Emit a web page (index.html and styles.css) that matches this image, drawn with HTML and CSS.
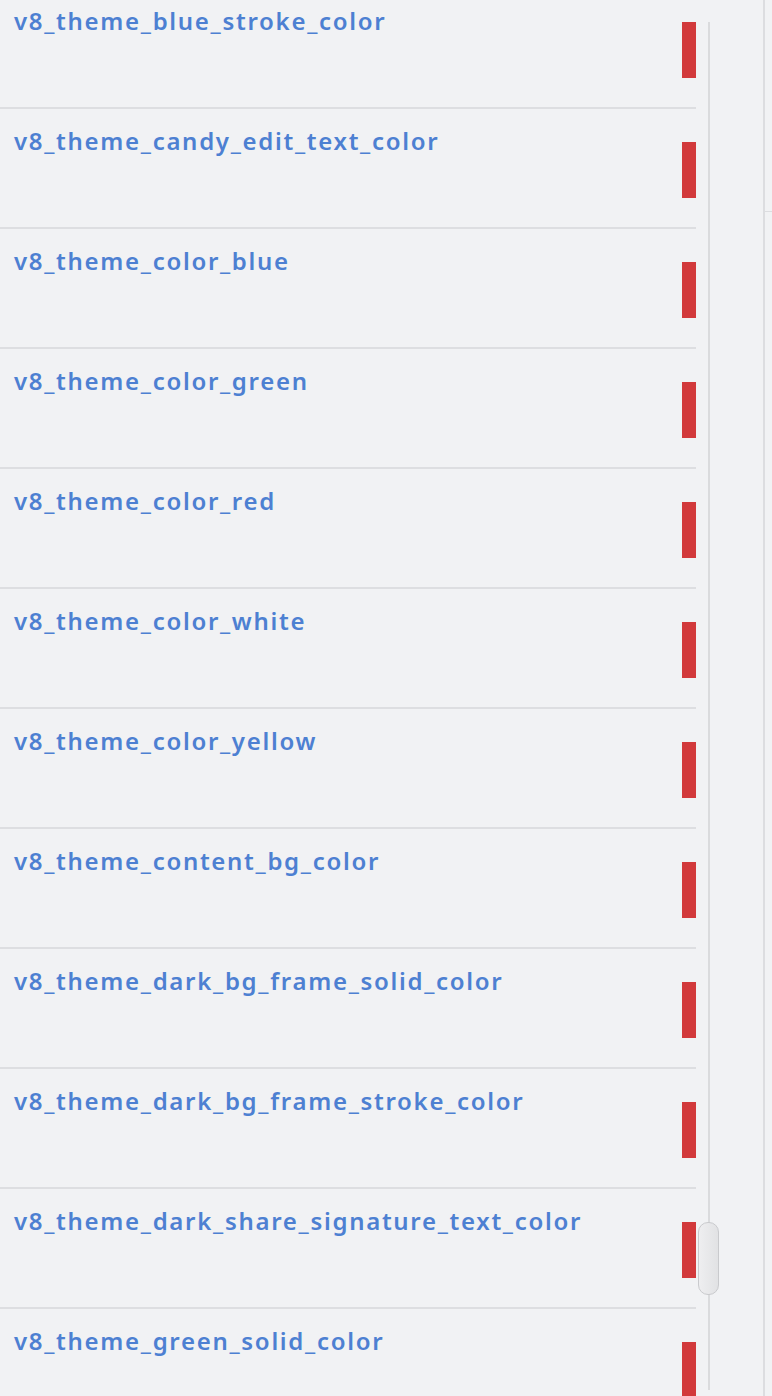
FILE: index.html
```html
<!DOCTYPE html>
<html>
<head>
<meta charset="utf-8">
<link rel="stylesheet" href="styles.css">
</head>
<body>
<div class="app">
  <div class="list">
    <div class="row"><span class="name">v8_theme_blue_stroke_color</span><span class="swatch"></span></div>
    <div class="row"><span class="name">v8_theme_candy_edit_text_color</span><span class="swatch"></span></div>
    <div class="row"><span class="name">v8_theme_color_blue</span><span class="swatch"></span></div>
    <div class="row"><span class="name">v8_theme_color_green</span><span class="swatch"></span></div>
    <div class="row"><span class="name">v8_theme_color_red</span><span class="swatch"></span></div>
    <div class="row"><span class="name">v8_theme_color_white</span><span class="swatch"></span></div>
    <div class="row"><span class="name">v8_theme_color_yellow</span><span class="swatch"></span></div>
    <div class="row"><span class="name">v8_theme_content_bg_color</span><span class="swatch"></span></div>
    <div class="row"><span class="name">v8_theme_dark_bg_frame_solid_color</span><span class="swatch"></span></div>
    <div class="row"><span class="name">v8_theme_dark_bg_frame_stroke_color</span><span class="swatch"></span></div>
    <div class="row"><span class="name">v8_theme_dark_share_signature_text_color</span><span class="swatch"></span></div>
    <div class="row"><span class="name">v8_theme_green_solid_color</span><span class="swatch"></span></div>
  </div>
  <div class="scroll">
    <div class="track"></div>
    <div class="thumb"></div>
  </div>
  <div class="side"><div class="side-top"></div></div>
</div>
</body>
</html>
```

FILE: styles.css
```css
html, body {
  margin: 0;
  padding: 0;
  background: #f1f2f4;
}
.app {
  display: flex;
  width: 772px;
  height: 1396px;
  overflow: hidden;
}
.list {
  width: 696px;
  flex: none;
  margin-top: -11px;
}
.row {
  height: 118px;
  border-bottom: 2px solid #dddee1;
  display: flex;
  justify-content: space-between;
  align-items: flex-start;
  padding-left: 14px;
  box-sizing: content-box;
}
.name {
  font-family: "Noto Sans", sans-serif;
  font-weight: 600;
  font-size: 24px;
  line-height: 30px;
  margin-top: 17px;
  color: #4d80d2;
  letter-spacing: 1.7px;
}
.swatch {
  width: 14px;
  height: 56px;
  margin-top: 33px;
  background: #d2393b;
}
.scroll {
  width: 67px;
  flex: none;
  position: relative;
  padding-left: 12px;
  padding-top: 22px;
  padding-bottom: 6px;
  box-sizing: border-box;
}
.track {
  width: 2px;
  height: 100%;
  background: #dadbdd;
}
.thumb {
  position: absolute;
  left: 2px;
  top: 1222px;
  width: 21px;
  height: 73px;
  box-sizing: border-box;
  border: 1px solid #c9cacd;
  border-radius: 10px;
  background: linear-gradient(to right, #eeeef0, #e1e2e4);
}
.side {
  flex: 1;
  border-left: 2px solid #dcdde0;
}
.side-top {
  height: 211px;
  border-bottom: 1px solid #dcdde0;
}
```
